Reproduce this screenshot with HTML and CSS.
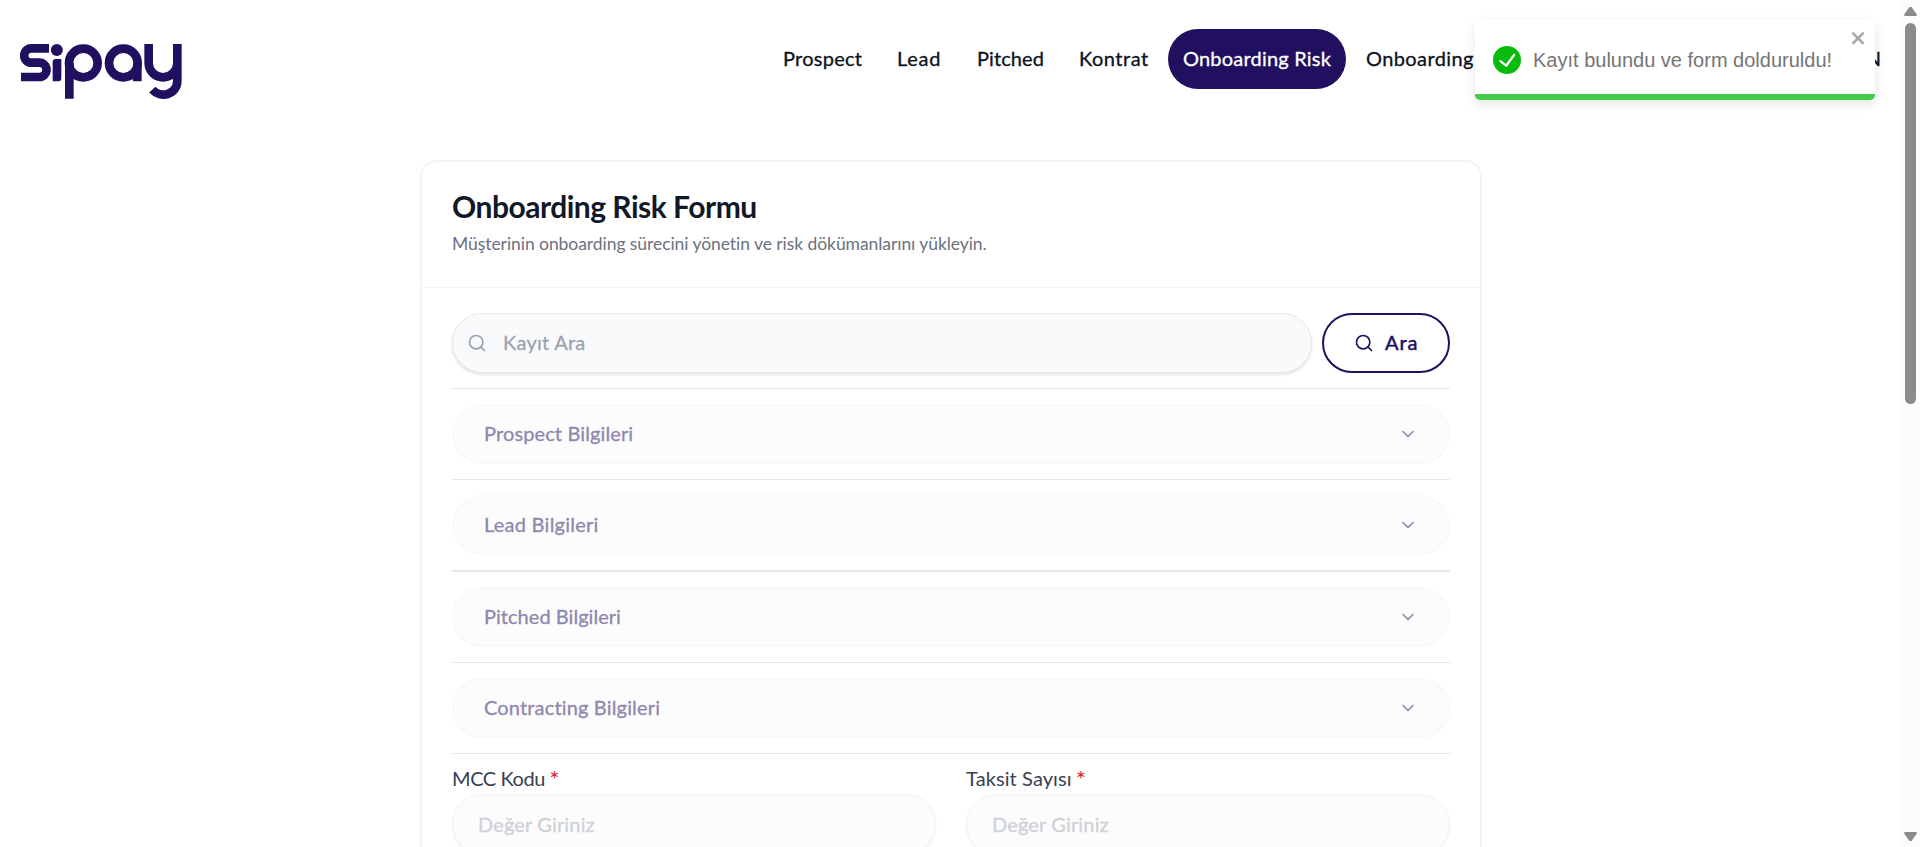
FILE: index.html
```html
<!DOCTYPE html>
<html lang="tr">
<head>
<meta charset="utf-8">
<title>Onboarding Risk Formu</title>
<link rel="stylesheet" href="styles.css">
</head>
<body>
<div class="app">
  <div class="page">
    <header class="topbar">
      <svg class="logo" viewBox="60 72 486 165" role="img" aria-label="sipay">
        <g fill="none" stroke="#20105f" stroke-width="26">
          <path d="M147 85H94a21.500 21.500 0 0 0 0 43H118a21.500 21.500 0 0 1 0 43H63"/>
          <path d="M208 236V129M412 184V129M446 72V129a43 43 0 0 0 86 0V72M532 129V181c0 46-52 54-75 28"/>
          <circle cx="250" cy="129" r="43"/>
          <circle cx="370" cy="129" r="43"/>
        </g>
        <circle cx="170.500" cy="90" r="18" fill="#20105f"/>
        <path d="M158 184V126q0-9 9-9h17v58q0 9-9 9z" fill="#20105f"/>
      </svg>
      <nav class="nav">
        <a class="link w-prospect">Prospect</a>
        <a class="link w-lead">Lead</a>
        <a class="link w-pitched">Pitched</a>
        <a class="link w-kontrat">Kontrat</a>
        <a class="link active">Onboarding Risk</a>
        <a class="link w-onb">Onboarding</a>
        <a class="link last">N</a>
      </nav>
    </header>
    <main class="card">
      <div class="card-head">
        <h1>Onboarding Risk Formu</h1>
        <p>Müşterinin onboarding sürecini yönetin ve risk dökümanlarını yükleyin.</p>
      </div>
      <div class="card-body">
        <div class="search-row">
          <div class="search"><svg class="glass" viewBox="0 0 24 24"><circle cx="11" cy="11" r="8"/><path d="m21 21-4.300-4.300"/></svg><span>Kayıt Ara</span></div>
          <button class="btn"><svg class="glass" viewBox="0 0 24 24"><circle cx="11" cy="11" r="8"/><path d="m21 21-4.300-4.300"/></svg><span>Ara</span></button>
        </div>
        <hr>
        <div class="acc prospect"><span>Prospect Bilgileri</span><svg class="chev" viewBox="0 0 24 24"><path d="m6 9 6 6 6-6"/></svg></div>
        <hr>
        <div class="acc lead"><span>Lead Bilgileri</span><svg class="chev" viewBox="0 0 24 24"><path d="m6 9 6 6 6-6"/></svg></div>
        <hr class="thick">
        <div class="acc pitched"><span>Pitched Bilgileri</span><svg class="chev" viewBox="0 0 24 24"><path d="m6 9 6 6 6-6"/></svg></div>
        <hr>
        <div class="acc contracting"><span>Contracting Bilgileri</span><svg class="chev" viewBox="0 0 24 24"><path d="m6 9 6 6 6-6"/></svg></div>
        <hr>
        <div class="fields">
          <div class="field"><label><span class="mcc">MCC Kodu</span> <b>*</b></label><div class="input"><span>Değer Giriniz</span></div></div>
          <div class="field"><label><span class="taksit">Taksit Sayısı</span> <b>*</b></label><div class="input"><span>Değer Giriniz</span></div></div>
        </div>
      </div>
    </main>
  </div>
  <div class="scroll"><i class="up"></i><i class="thumb"></i><i class="down"></i></div>
  <div class="toast">
    <svg class="ok" viewBox="0 0 24 24"><path fill="#07bc0c" d="M12 0a12 12 0 1 0 12 12A12.014 12.014 0 0 0 12 0zm6.927 8.200-6.845 9.289a1.011 1.011 0 0 1-1.430.188l-4.888-3.908a1 1 0 1 1 1.250-1.562l4.076 3.261 6.227-8.451a1 1 0 1 1 1.610 1.183z"/></svg>
    <span class="msg">Kayıt bulundu ve form dolduruldu!</span>
    <svg class="close" viewBox="0 0 14 16"><path fill-rule="evenodd" d="M7.710 8.230l3.750 3.750-1.480 1.480-3.750-3.750-3.750 3.750L1 11.980l3.750-3.750L1 4.480 2.480 3l3.750 3.750L9.980 3l1.480 1.480-3.750 3.750z"/></svg>
  </div>
</div>
</body>
</html>
```
FILE: styles.css
```css
* { box-sizing: border-box; }
body {
  margin: 0;
  background: #fff;
  font: 20px/28px Lato, "Noto Sans", sans-serif;
  color: #0b1220;
}
.app {
  position: relative;
  display: flex;
  height: 847px;
  overflow: hidden;
}
.page { flex: 1; min-width: 0; }
.topbar {
  display: flex;
  justify-content: space-between;
  align-items: flex-start;
  height: 160px;
  padding: 29px 5px 0 20px;
}
.logo { width: 162px; height: 55px; margin-top: 15px; }
.nav { display: flex; gap: 4px; white-space: nowrap; }
.link {
  display: flex;
  align-items: center;
  height: 60px;
  padding: 0 15px 3px 16px;
  border-radius: 30px;
  -webkit-text-stroke: .3px currentColor;
}
.w-prospect { width: 110px; letter-spacing: .25px; }
.w-lead { width: 76px; letter-spacing: .7px; }
.w-pitched { width: 98px; letter-spacing: .1px; }
.w-kontrat { width: 101px; letter-spacing: .5px; }
.active { width: 178px; padding-left: 15px; background: #20105f; color: #fff; letter-spacing: .2px; }
.w-onb { width: 140px; letter-spacing: .4px; }
.last { width: 402px; justify-content: flex-end; }
.card {
  width: 1062px;
  height: 900px;
  margin-left: 420px;
  border: 2px solid #f3f4f6;
  border-radius: 16px;
}
.card-head {
  height: 126px;
  padding: 24px 30px 0;
  border-bottom: 1px solid #f3f4f6;
}
h1 {
  margin: 0;
  font: 700 30px/40px Lato, sans-serif;
  letter-spacing: -.5px;
  color: #111827;
}
p {
  margin: 2px 0 0;
  font-size: 17.5px;
  line-height: 31px;
  letter-spacing: -.06px;
  color: #6b7280;
}
.card-body { padding: 25px 30px 0; }
.search-row { display: flex; gap: 10px; }
.search {
  display: flex;
  align-items: center;
  flex: 1;
  height: 60px;
  padding: 0 14px 1px;
  gap: 16px;
  border: 1px solid #e5e7eb;
  border-radius: 30px;
  background: #f9fafb;
  box-shadow: 0 2px 3px #0000001a;
  color: #9ca3af;
  letter-spacing: .25px;
  -webkit-text-stroke: .3px currentColor;
}
.search span, .btn span, .acc span { padding-bottom: 2px; }
.glass, .chev {
  width: 20px;
  height: 20px;
  fill: none;
  stroke: currentColor;
  stroke-width: 2;
  stroke-linecap: round;
  stroke-linejoin: round;
}
.btn {
  display: flex;
  align-items: center;
  width: 128px;
  height: 60px;
  padding: 0 0 1px 30px;
  gap: 11px;
  border: 2px solid #20105f;
  border-radius: 30px;
  background: #fff;
  color: #20105f;
  font: 20px/28px Lato, sans-serif;
  letter-spacing: .9px;
  -webkit-text-stroke: .5px currentColor;
}
hr {
  height: 1px;
  margin: 15px 0;
  border: 0;
  background: #e5e7eb;
}
.thick { height: 2px; }
.acc {
  display: flex;
  align-items: center;
  justify-content: space-between;
  height: 60px;
  padding: 0 30px;
  border: 2px solid #f9f9fa;
  border-radius: 30px;
  background: #fcfcfc;
  color: #8f87af;
  -webkit-text-stroke: .3px currentColor;
}
.prospect { letter-spacing: .12px; }
.lead { letter-spacing: .25px; }
.pitched { letter-spacing: .04px; }
.contracting { letter-spacing: .16px; }
.fields { display: flex; gap: 30px; }
.field { flex: 1; }
label {
  display: block;
  height: 30px;
  margin-top: -5px;
  color: #374151;
}
.mcc { letter-spacing: -.4px; }
.taksit { letter-spacing: .1px; }
label b {
  margin-left: -1px;
  font: 24px/20px Lato, sans-serif;
  vertical-align: -2px;
  color: #e02430;
}
.input {
  display: flex;
  align-items: center;
  height: 60px;
  padding: 0 24px 0 25px;
  border: 1px solid #f2f3f5;
  border-radius: 30px;
  background: #fcfcfc;
  box-shadow: 0 2px 3px #0000000d;
  color: #ced1d7;
  letter-spacing: .15px;
  -webkit-text-stroke: .3px currentColor;
}
.scroll {
  display: flex;
  flex-direction: column;
  align-items: center;
  width: 19px;
  padding: 7px 0 6px;
  background: #fcfcfc;
}
.up, .down {
  width: 13px;
  height: 9px;
  background: #8b8b8b;
  clip-path: polygon(42% 0, 58% 0, 100% 85%, 94% 100%, 6% 100%, 0 85%);
}
.down { margin-top: auto; transform: rotate(180deg); }
.thumb { width: 11px; height: 381px; margin-top: 7px; border-radius: 6px; background: #8b8b8b; }
.toast {
  position: absolute;
  top: 20px;
  left: 1475px;
  display: flex;
  align-items: center;
  width: 400px;
  height: 80px;
  padding: 0 18px;
  border-radius: 5px;
  background: linear-gradient(#43cc47, #43cc47) bottom / 100% 6px no-repeat #fff;
  box-shadow: 0 4px 12px #0000001a;
  overflow: hidden;
  color: #757575;
  font: 20px/28px "Liberation Sans", Arial, sans-serif;
}
.ok { width: 28px; height: 28px; margin-right: 12px; }
.close { position: absolute; top: 8px; right: 7px; width: 18px; height: 20px; fill: #aaa; }
```
